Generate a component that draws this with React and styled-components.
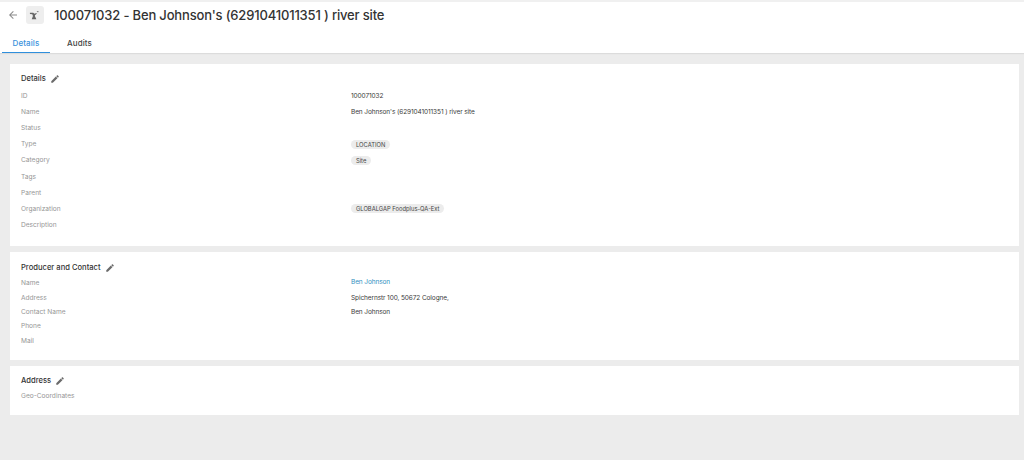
import React from "react";
import styled, { createGlobalStyle } from "styled-components";

const GlobalStyle = createGlobalStyle`
  html, body {
    margin: 0;
    height: 100%;
    background: #ececec;
    font-family: "Inter", "Open Sans", sans-serif;
  }
`;

const Page = styled.div`
  min-height: 460px;
  background: #ececec;
`;

const Header = styled.header`
  background: #fff;
  border-top: 2px solid #f0f0f0;
  box-shadow: 0 1px 1px #dcdcdc;
  height: 51px;
  display: flex;
  flex-direction: column;
`;

const TitleRow = styled.div`
  display: flex;
  align-items: center;
  height: 26px;
  padding-left: 7px;
`;

const BackButton = styled.button`
  border: none;
  background: none;
  padding: 0;
  width: 12px;
  height: 12px;
  display: flex;
  color: #8a8a8a;
`;

const EntityIcon = styled.div`
  width: 18px;
  height: 18px;
  margin-left: 6.5px;
  background: #eeeeee;
  border-radius: 3px;
  display: flex;
  align-items: center;
  justify-content: center;
  color: #666;
`;

const Title = styled.h1`
  margin: 0 0 0 10.5px;
  font-size: 13px;
  font-weight: 500;
  letter-spacing: -0.17px;
  color: #333;
  white-space: nowrap;
`;

const Tabs = styled.nav`
  display: flex;
  height: 25px;
  padding-left: 2px;
`;

const Tab = styled.div`
  box-sizing: border-box;
  width: 48px;
  padding-top: 6px;
  font-size: 8px;
  font-weight: 500;
  letter-spacing: 0.1px;
  line-height: 18px;
  text-align: center;
  color: ${(p) => (p.$active ? "#3a92dc" : "#444")};
  border-bottom: ${(p) => (p.$active ? "1px solid #2f8fdc" : "none")};
  margin-right: ${(p) => (p.$active ? "5.5px" : "0")};
`;

const Content = styled.main`
  display: flex;
  flex-direction: column;
  gap: 6px;
  padding: 11px 5px 0 10px;
`;

const Card = styled.section`
  background: #fff;
  height: ${(p) => p.$height}px;
  padding: ${(p) => p.$top}px 10px 0 11px;
  box-sizing: border-box;
`;

const CardTitle = styled.h2`
  margin: 0;
  display: flex;
  align-items: center;
  gap: 4px;
  font-size: 7.6px;
  font-weight: 500;
  line-height: 10px;
  color: #333;
  margin-bottom: ${(p) => p.$gap}px;
`;

const EditIcon = styled.svg`
  width: 10px;
  height: 10px;
  fill: #6b6b6b;
`;

const FieldRow = styled.div`
  display: grid;
  grid-template-columns: 330px 1fr;
  align-items: center;
  height: ${(p) => p.$height}px;
`;

const Label = styled.div`
  font-size: 6.6px;
  color: #969696;
`;

const Value = styled.div`
  font-size: 6.5px;
  letter-spacing: -0.1px;
  color: #3a3a3a;
`;

const ContactLink = styled.a`
  display: block;
  margin-bottom: 2px;
  color: #2f8fc0;
`;

const Chip = styled.span`
  display: inline-block;
  font-size: 5.8px;
  letter-spacing: 0;
  line-height: 9px;
  padding: 0 5px;
  border-radius: 5px;
  background: #ececec;
  color: #444;
`;

const Pencil = () => (
  <EditIcon viewBox="0 0 24 24">
    <path d="M3 17.25V21h3.75L17.81 9.94l-3.75-3.75L3 17.25zM20.71 7.04a1 1 0 0 0 0-1.41l-2.34-2.34a1 1 0 0 0-1.41 0l-1.83 1.83 3.75 3.75 1.83-1.83z" />
  </EditIcon>
);

const Field = ({ label, height, children }) => (
  <FieldRow $height={height}>
    <Label>{label}</Label>
    <Value>{children}</Value>
  </FieldRow>
);

const App = () => (
  <Page>
    <GlobalStyle />
    <Header>
      <TitleRow>
        <BackButton aria-label="Back">
          <svg viewBox="0 0 24 24" width="12" height="12" fill="currentColor">
            <path d="M20 11H7.83l5.59-5.59L12 4l-8 8 8 8 1.41-1.41L7.83 13H20v-2z" />
          </svg>
        </BackButton>
        <EntityIcon>
          <svg viewBox="0 0 12 12" width="11" height="11" fill="currentColor">
            <path d="M1 3h3.6L6 4.2 8 3.2l.5.9-2 1.5v1.2l1.6 3.2H3l1.3-3.4-.7-2L1 4.4z" />
            <path d="M8.6 1.4h1.8v.9H8.6z" />
          </svg>
        </EntityIcon>
        <Title>100071032 - Ben Johnson's (6291041011351 ) river site</Title>
      </TitleRow>
      <Tabs>
        <Tab $active>Details</Tab>
        <Tab>Audits</Tab>
      </Tabs>
    </Header>
    <Content>
      <Card $height={182} $top={10}>
        <CardTitle $gap={4}>
          Details <Pencil />
        </CardTitle>
        <Field label="ID" height={16.1}>100071032</Field>
        <Field label="Name" height={16.1}>Ben Johnson's (6291041011351 ) river site</Field>
        <Field label="Status" height={16.1} />
        <Field label="Type" height={16.1}><Chip>LOCATION</Chip></Field>
        <Field label="Category" height={16.1}><Chip>Site</Chip></Field>
        <Field label="Tags" height={16.1} />
        <Field label="Parent" height={16.1} />
        <Field label="Organization" height={16.1}><Chip>GLOBALGAP Foodplus-QA-Ext</Chip></Field>
        <Field label="Description" height={16.1} />
      </Card>
      <Card $height={108} $top={11}>
        <CardTitle $gap={3}>
          Producer and Contact <Pencil />
        </CardTitle>
        <Field label="Name" height={14.4}><ContactLink>Ben Johnson</ContactLink></Field>
        <Field label="Address" height={14.4}>Spichernstr 100, 50672 Cologne,</Field>
        <Field label="Contact Name" height={14.4}>Ben Johnson</Field>
        <Field label="Phone" height={14.4} />
        <Field label="Mail" height={14.4} />
      </Card>
      <Card $height={49} $top={10}>
        <CardTitle $gap={3}>
          Address <Pencil />
        </CardTitle>
        <Field label="Geo-Coordinates" height={14.4} />
      </Card>
    </Content>
  </Page>
);

export default App;
